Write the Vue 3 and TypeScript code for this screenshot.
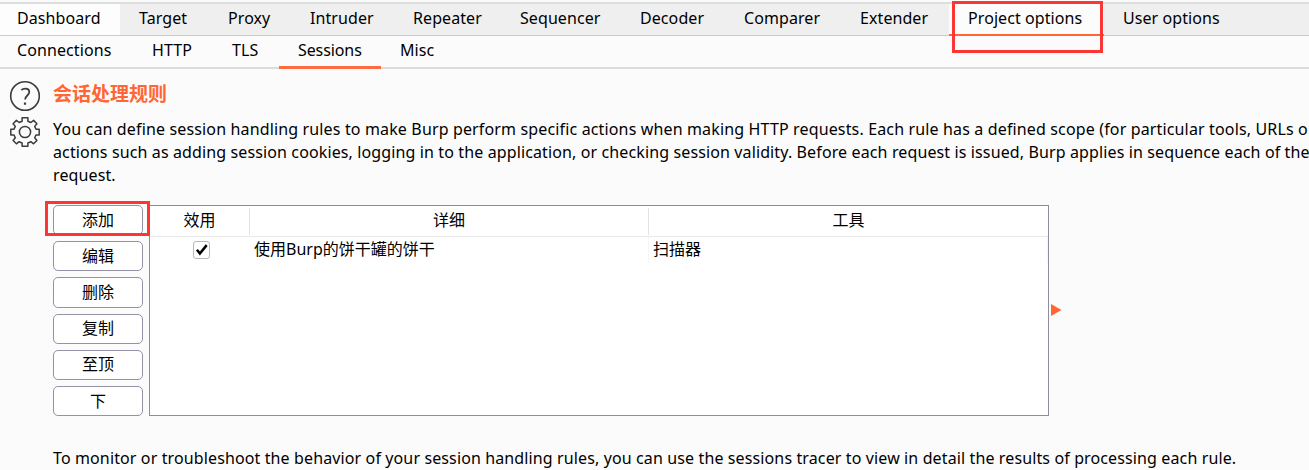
<script setup lang="ts">
interface Tab {
  label: string
  width: number
  state?: 'plain' | 'active'
}

const mainTabs: Tab[] = [
  { label: 'Dashboard', width: 120, state: 'plain' },
  { label: 'Target', width: 89 },
  { label: 'Proxy', width: 82 },
  { label: 'Intruder', width: 103 },
  { label: 'Repeater', width: 107 },
  { label: 'Sequencer', width: 120 },
  { label: 'Decoder', width: 104 },
  { label: 'Comparer', width: 116 },
  { label: 'Extender', width: 108 },
  { label: 'Project options', width: 155, state: 'active' },
  { label: 'User options', width: 136 },
]

const subTabs: Tab[] = [
  { label: 'Connections', width: 133 },
  { label: 'HTTP', width: 80 },
  { label: 'TLS', width: 66 },
  { label: 'Sessions', width: 102, state: 'active' },
  { label: 'Misc', width: 75 },
]

const actions: string[] = ['添加', '编辑', '删除', '复制', '至顶', '下']
</script>

<template>
  <div class="window">
    <nav class="main-tabs">
      <div
        v-for="tab in mainTabs"
        :key="tab.label"
        class="tab"
        :class="tab.state"
        :style="{ width: tab.width + 'px' }"
      >
        {{ tab.label }}
        <span v-if="tab.label === 'Project options'" class="mark mark-tab"></span>
      </div>
    </nav>
    <nav class="sub-tabs">
      <div
        v-for="tab in subTabs"
        :key="tab.label"
        class="sub-tab"
        :class="tab.state"
        :style="{ width: tab.width + 'px' }"
      >
        {{ tab.label }}
      </div>
    </nav>

    <main class="panel">
      <aside class="icons">
        <svg width="32" height="32" viewBox="0 0 32 32" fill="none" stroke="#3c3c3c">
          <circle cx="16" cy="16" r="14.3" stroke-width="1.6" />
          <path d="M12.4 10.2C13.4 9 15 8.6 16.3 8.6c2.5 0 4 1.3 4 3.4 0 3.3-4.2 3.7-4.2 7.4" stroke-width="1.8" />
          <path d="M14.9 22.6h2.2v2.2h-2.2z" fill="#3c3c3c" stroke="none" />
        </svg>
        <svg class="gear" width="32" height="32" viewBox="0 0 32 32" fill="none" stroke="#3c3c3c" stroke-width="1.5" stroke-linejoin="round">
          <path d="M13.1 1.8h5.8v3.4l3 1.3 2.7-2.1 3.3 3.3-2.2 2.7 1.3 2.8h3.2v5.800h-3.200l-1.300 2.800 2.200 2.700-3.300 3.300-2.700-2.100-3 1.300v3.300h-5.800v-3.300l-3-1.300-2.700 2.100-3.300-3.300 2.200-2.700-1.300-2.800H1.800v-5.800H5l1.300-2.800-2.200-2.700 3.300-3.300 2.700 2.100 3-1.300z" />
          <circle cx="16" cy="16" r="5.6" />
        </svg>
      </aside>
      <section class="content">
        <h1>会话处理规则</h1>
        <div class="description">
          <div class="line first">You can define session handling rules to make Burp perform specific actions when making HTTP requests. Each rule has a defined scope (for particular tools, URLs or</div>
          <div class="line">actions such as adding session cookies, logging in to the application, or checking session validity. Before each request is issued, Burp applies in sequence each of the</div>
          <div class="line">request.</div>
        </div>
        <div class="rules">
          <div class="actions">
            <button v-for="(action, i) in actions" :key="action" type="button">
              {{ action }}
              <span v-if="i === 0" class="mark mark-add"></span>
            </button>
          </div>
          <div class="table">
            <div class="row head">
              <div class="cell">效用</div>
              <div class="cell">详细</div>
              <div class="cell">工具</div>
            </div>
            <div class="row body">
              <div class="cell">
                <span class="check">
                  <svg width="16" height="16" viewBox="0 0 16 16" fill="none" stroke="#000" stroke-width="2.5">
                    <path d="M2.9 7.800 5.900 11.600 12.700 3.100" />
                  </svg>
                </span>
              </div>
              <div class="cell">使用Burp的饼干罐的饼干</div>
              <div class="cell">扫描器</div>
            </div>
          </div>
          <svg class="arrow" width="11" height="12" viewBox="0 0 11 12"><path d="M0 0 10.5 6 0 12z" fill="#ff6633" /></svg>
        </div>
        <p class="line footer">To monitor or troubleshoot the behavior of your session handling rules, you can use the sessions tracer to view in detail the results of processing each rule.</p>
      </section>
    </main>
  </div>
</template>

<style>
body { margin: 0; }
</style>

<style scoped>
.window {
  width: 1309px;
  height: 470px;
  overflow: hidden;
  box-sizing: border-box;
  padding-top: 2px;
  background: #fbfbfb;
  color: #000;
  font-family: "Noto Sans", "Noto Sans CJK SC", sans-serif;
  font-size: 16px;
  line-height: 22px;
}
.window * { box-sizing: border-box; }
.main-tabs {
  display: flex;
  height: 34px;
  border-top: 2px solid #dcdede;
  border-bottom: 1px solid #cbcbcb;
  background: #efefef;
}
.tab {
  position: relative;
  flex: none;
  height: 32px;
  padding: 3px 0 0 19px;
  white-space: nowrap;
  letter-spacing: 0.08px;
}
.tab.plain {
  height: 31px;
  padding-left: 17px;
  background: #fdfdfd;
}
.tab.active {
  background: #fcfcfc;
  border-bottom: 2px solid #ff6633;
}
.mark {
  position: absolute;
  border: 3px solid #fc3535;
  pointer-events: none;
}
.mark-tab { left: 3px; top: -3px; width: 151px; height: 52px; z-index: 2; }
.sub-tabs {
  display: flex;
  height: 33px;
  border-bottom: 2px solid #d9dddd;
}
.sub-tab {
  flex: none;
  height: 33px;
  padding: 3px 0 0 19px;
  white-space: nowrap;
  letter-spacing: 0.1px;
}
.sub-tab:first-child { padding-left: 17px; }
.sub-tab.active { border-bottom: 3px solid #ff6c42; letter-spacing: -0.1px; }
.panel { display: flex; }
.icons {
  display: flex;
  flex-direction: column;
  flex: none;
  gap: 4px;
  width: 53px;
  padding: 11px 0 0 9px;
}
.content { flex: none; width: 1266px; overflow: hidden; margin-left: -10px; padding-left: 10px; }
h1 {
  margin: 13px 0 0;
  color: #ff6633;
  font-size: 19px;
  font-weight: 700;
  line-height: 24px;
}
.description { margin-top: 12px; }
.line { height: 23px; line-height: 23px; white-space: nowrap; margin: 0; letter-spacing: 0.122px; }
.line.first { letter-spacing: 0.146px; }
.rules { display: flex; margin-top: 18px; height: 211px; }
.actions { display: flex; flex-direction: column; gap: 6px; width: 96px; }
button {
  position: relative;
  flex: none;
  width: 90px;
  height: 30.2px;
  padding: 0 0 1px;
  border: 1px solid #9492a4;
  border-radius: 5px;
  background: #fff;
  color: #000;
  font: inherit;
}
.mark-add { left: -9px; top: -5px; width: 105px; height: 35px; }
.table { width: 900px; height: 211px; border: 1px solid #8e8ca0; background: #fff; }
.row { display: grid; grid-template-columns: 100px 399px 1fr; }
.head { height: 31px; padding: 2px 0 1px; border-bottom: 1px solid #e9e9e9; text-align: center; line-height: 25px; }
.head .cell:not(:last-child) { border-right: 1px solid #e3e3e3; }
.body { height: 26px; line-height: 25px; }
.body .cell { border-right: 1px solid #f5f5f5; padding-left: 4px; }
.body .cell:first-child { display: flex; padding: 4px 0 0 43px; border: 0; }
.check { width: 17px; height: 18px; border: 1px solid #b8b8b8; border-radius: 3px; }
.check svg { display: block; }
.arrow { margin: 99px 0 0 2px; }
.footer { margin-top: 31px; }
</style>
